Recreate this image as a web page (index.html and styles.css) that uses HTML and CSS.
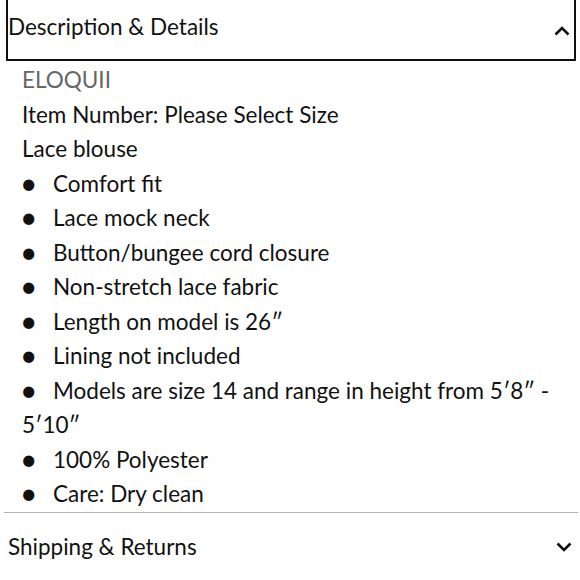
FILE: index.html
```html
<!DOCTYPE html>
<html>
<head>
<meta charset="utf-8">
<link rel="stylesheet" href="styles.css">
</head>
<body>
<div class="accordion">
  <div class="panel open">
    <div class="panel-head">
      <span class="title">Description &amp; Details</span>
      <svg class="chev" width="16" height="10" viewBox="0 0 16 10"><path d="M1.5 8.5 L8 2 L14.5 8.5" fill="none" stroke="#111" stroke-width="2.6"/></svg>
    </div>
    <div class="panel-body">
      <div class="brand">ELOQUII</div>
      <div class="line">Item Number: Please Select Size</div>
      <div class="line">Lace blouse</div>
      <ul class="bullets">
        <li>Comfort fit</li>
        <li>Lace mock neck</li>
        <li>Button/bungee cord closure</li>
        <li>Non-stretch lace fabric</li>
        <li>Length on model is 26″</li>
        <li>Lining not included</li>
        <li>Models are size 14 and range in height from 5′8″ - 5′10″</li>
        <li>100% Polyester</li>
        <li>Care: Dry clean</li>
      </ul>
    </div>
  </div>
  <div class="panel closed">
    <div class="panel-head">
      <span class="title">Shipping &amp; Returns</span>
      <svg class="chev" width="16" height="10" viewBox="0 0 16 10"><path d="M1.5 1.5 L8 8 L14.5 1.5" fill="none" stroke="#111" stroke-width="2.6"/></svg>
    </div>
  </div>
</div>
</body>
</html>
```
FILE: styles.css
```css
html, body {
  margin: 0;
  padding: 0;
  background: #fff;
}
body {
  font-family: "Lato", "Noto Sans", sans-serif;
  color: #111;
  font-size: 22.5px;
  line-height: 34.5px;
}
.accordion {
  padding: 0 2px 0 4px;
}
.open .panel-head {
  margin: -20px 2px 0 2px;
  height: 81px;
  border: 2px solid #111;
  box-sizing: border-box;
  padding: 6px 4px 0 0;
  display: flex;
  align-items: center;
  justify-content: space-between;
}
.open .panel-head .title {
  margin-top: 8px;
}
.open .panel-head .chev {
  margin-top: 14px;
}
.panel-body {
  padding: 2px 0 0 18px;
}
.brand {
  color: #666;
}
.bullets {
  list-style: none;
  margin: 0;
  padding: 0;
}
.bullets li::before {
  content: "•";
  display: inline-block;
  width: 31px;
  margin-left: -2px;
  margin-right: 2px;
  font-size: 30px;
  line-height: 1;
  vertical-align: -2px;
}
.closed {
  border-top: 1.5px solid #b3b3b3;
}
.closed .panel-head {
  display: flex;
  align-items: center;
  justify-content: space-between;
  padding: 17px 6px 0 4px;
}
```
